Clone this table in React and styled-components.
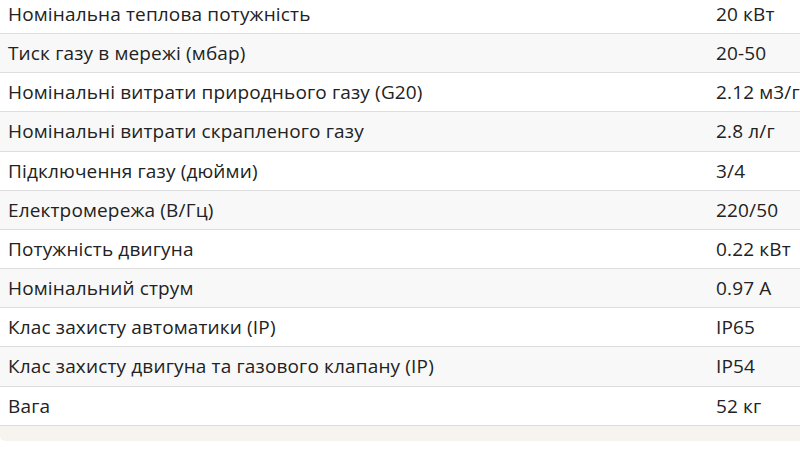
import React from 'react';
import styled, { createGlobalStyle } from 'styled-components';

const GlobalStyle = createGlobalStyle`
  html, body {
    margin: 0;
    padding: 0;
    background: #fff;
    overflow: hidden;
  }
  body {
    font-family: "Open Sans", "Noto Sans", sans-serif;
  }
`;

const Page = styled.div`
  width: 830px;
  margin-top: -5px;
`;

const SpecTable = styled.div`
  display: flex;
  flex-direction: column;
  border-radius: 0 0 5px 5px;
  overflow: hidden;
  background: #f7f4ef;
  padding-bottom: 15px;
`;

const Row = styled.div`
  display: grid;
  grid-template-columns: 708px 1fr;
  background: ${p => (p.striped ? '#f8f8f8' : '#ffffff')};
  border-bottom: 1px solid #dedede;
  color: #222;
  font-size: 19px;
  line-height: 26.15px;
  letter-spacing: 0.15px;
`;

const Cell = styled.div`
  padding: 6px 8px;
  white-space: nowrap;
`;

const specs = [
  ['Номінальна теплова потужність', '20 кВт'],
  ['Тиск газу в мережі (мбар)', '20-50'],
  ['Номінальні витрати природнього газу (G20)', '2.12 м3/год'],
  ['Номінальні витрати скрапленого газу', '2.8 л/г'],
  ['Підключення газу (дюйми)', '3/4'],
  ['Електромережа (В/Гц)', '220/50'],
  ['Потужність двигуна', '0.22 кВт'],
  ['Номінальний струм', '0.97 А'],
  ['Клас захисту автоматики (IP)', 'IP65'],
  ['Клас захисту двигуна та газового клапану (IP)', 'IP54'],
  ['Вага', '52 кг'],
];

export default function App() {
  return (
    <>
      <GlobalStyle />
      <Page>
        <SpecTable>
          {specs.map(([name, value], i) => (
            <Row key={name} striped={i % 2 === 1}>
              <Cell>{name}</Cell>
              <Cell>{value}</Cell>
            </Row>
          ))}
        </SpecTable>
      </Page>
    </>
  );
}
